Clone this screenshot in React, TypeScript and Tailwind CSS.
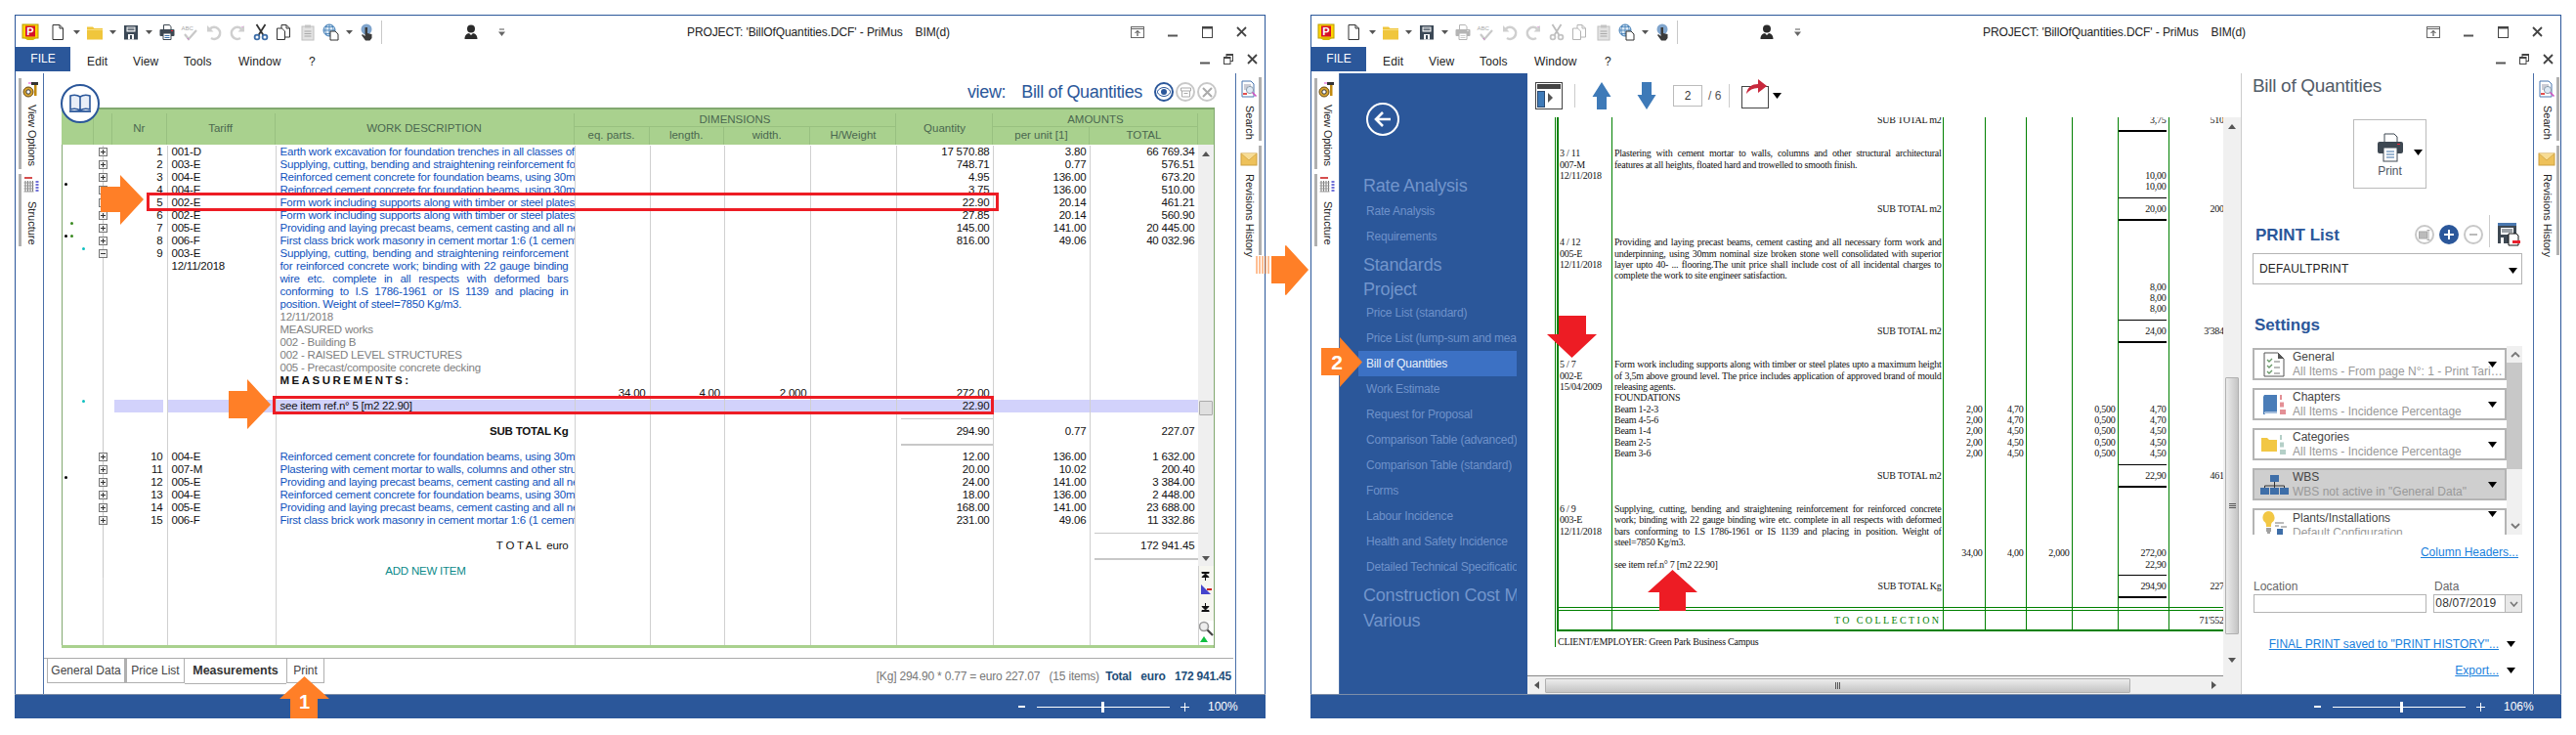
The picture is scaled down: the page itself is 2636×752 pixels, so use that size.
import React from "react";

const Dd = ({ className = "" }: { className?: string }) => (
  <svg width="7" height="5" viewBox="0 0 7 5" className={"flex-none " + className}><path d="M0 1h7L3.5 5z" fill="#555" /></svg>
);
const BlackTri = ({ className = "" }: { className?: string }) => (
  <svg width="9" height="6" viewBox="0 0 9 6" className={"flex-none " + className}><path d="M0 0h9L4.5 6z" fill="#000" /></svg>
);

const Ic = ({ children, className = "" }: { children: React.ReactNode; className?: string }) => (
  <svg width="18" height="18" viewBox="0 0 18 18" className={"flex-none " + className}>{children}</svg>
);

const PLogo = () => (
  <Ic>
    <rect x="1" y="1" width="16" height="14" fill="#ffd400" stroke="#b89b00" />
    <rect x="4" y="2.5" width="10" height="11" fill="#d5102a" />
    <path d="M3 15h12l-3 2H6z" fill="#d8b800" />
    <text x="9" y="12" textAnchor="middle" fontSize="11" fontWeight="bold" fill="#fff" fontFamily="Liberation Sans">P</text>
  </Ic>
);
const DocI = () => (
  <Ic><path d="M4 1.5h7l3.5 3.5v11.5H4z" fill="#fff" stroke="#333" /><path d="M11 1.5V5h3.5" fill="none" stroke="#333" /></Ic>
);
const FolderI = () => (
  <Ic><path d="M1 5V3.5h6L8.5 5H17v11.5H1z" fill="#f0c63c" /><path d="M1 6.5h16" stroke="#f8dd80" /></Ic>
);
const SaveI = () => (
  <Ic><path d="M2 2h14v14.5H2z" fill="#3b4856" /><path d="M4.5 3.5h9v5h-9z" fill="#fff" /><path d="M5.5 5h7M5.5 6.7h7" stroke="#3b4856" /><path d="M6 11h6v5.5H6z" fill="#fff" /><path d="M8 12h2v4H8z" fill="#3b4856" /></Ic>
);
const PrinterI = ({ off }: { off?: boolean }) => {
  const c = off ? "#b4b4b4" : "#3e4852";
  return (
    <Ic>
      <path d="M5.5 1.5h6l1.5 2v4H5.5z" fill="#fff" stroke={c} />
      <rect x="1.5" y="6" width="15" height="7" rx="1" fill={c} />
      <rect x="13" y="7" width="2" height="1" fill={off ? "#ddd" : "#e23"} />
      <path d="M5 10h8v6.5H5z" fill="#fff" stroke={c} />
      <path d="M6.5 12.5h5M6.5 14.5h5" stroke={off ? "#ccc" : "#3a6ea5"} />
    </Ic>
  );
};
const AbcI = () => (
  <Ic>
    <text x="0.5" y="7" fontSize="6" fill="#a8a8a8" fontFamily="Liberation Sans">ABC</text>
    <path d="M4 11l4 5 8-9" fill="none" stroke="#c8c8c8" strokeWidth="2.2" />
    <path d="M7 15l1 1.5" stroke="#d070c8" />
  </Ic>
);
const UndoI = ({ flip }: { flip?: boolean }) => (
  <Ic className={flip ? "-scale-x-100" : ""}>
    <path d="M5 5.5a6 6 0 1 1 1 9.5" fill="none" stroke="#cfcfcf" strokeWidth="2.6" />
    <path d="M2 2v6.5h6.5z" fill="#cfcfcf" />
    {flip && <path d="M3.5 3l1 1" stroke="#d070c8" />}
  </Ic>
);
const CutI = ({ off }: { off?: boolean }) => {
  const c = off ? "#bcbcbc" : "#333";
  const b = off ? "#c4c4c4" : "#3e6ea8";
  return (
    <Ic>
      <path d="M4.5 1l7 11M13.5 1l-7 11" stroke={c} strokeWidth="1.8" />
      <circle cx="5" cy="14" r="2.4" fill="none" stroke={b} strokeWidth="1.8" />
      <circle cx="13" cy="14" r="2.4" fill="none" stroke={b} strokeWidth="1.8" />
    </Ic>
  );
};
const CopyI = ({ off }: { off?: boolean }) => {
  const c = off ? "#b4b4b4" : "#333";
  return (
    <Ic>
      <path d="M7 1.5h5l3.5 3.5v9H7z" fill="#fff" stroke={c} />
      <path d="M2.5 5h5l3 3v8.5h-8z" fill="#fff" stroke={c} />
      <path d="M12 1.5V5h3.5" fill="none" stroke={c} />
    </Ic>
  );
};
const PasteI = () => (
  <Ic><rect x="3" y="3" width="12" height="14" fill="#e2e2e2" stroke="#c0c0c0" /><rect x="6" y="1.5" width="6" height="3" fill="#c4c4c4" /><path d="M5.5 8h7M5.5 10.5h7M5.5 13h7" stroke="#a8a8a8" /></Ic>
);
const GlobeI = () => (
  <Ic>
    <circle cx="7" cy="7" r="6" fill="#dce9f5" stroke="#3e7bb5" />
    <path d="M1 7h12M7 1v12M3 3.5h8M3 10.5h8M4.5 1.8c-2 3.5-2 7 0 10.4M9.5 1.8c2 3.5 2 7 0 10.4" stroke="#3e7bb5" fill="none" strokeWidth=".8" />
    <path d="M8 8h5l3 3v6H8z" fill="#fff" stroke="#333" />
  </Ic>
);
const TouchI = () => (
  <Ic>
    <circle cx="9" cy="6" r="5.5" fill="#7fa4cc" />
    <path d="M7.5 4h2.5v6l4.5 1v4l-2 2.5H8L4 12l1-1 2.5 2z" fill="#3a3a3a" />
  </Ic>
);
const UserI = () => (
  <Ic><circle cx="9" cy="5.5" r="4" fill="#2b2b2b" /><path d="M2.5 16c0-4 2-5.5 4.5-6l2 2 2-2c2.500.5 4.500 2 4.500 6z" fill="#2b2b2b" /></Ic>
);
const QatI = () => (
  <svg width="7" height="8" viewBox="0 0 7 8" className="flex-none"><path d="M1 1h5" stroke="#555" /><path d="M0 3.500h7L3.500 8z" fill="#666" /></svg>
);
const RestoreUp = () => (
  <svg width="14" height="12" viewBox="0 0 14 12" className="flex-none"><rect x=".5" y=".5" width="13" height="11" fill="none" stroke="#666" /><path d="M.5 2.500h13" stroke="#666" /><path d="M7 10V4.500M4.500 7L7 4.500 9.500 7" fill="none" stroke="#333" /></svg>
);
const MinI = () => (<svg width="10" height="10" viewBox="0 0 10 10" className="flex-none"><path d="M0 8.500h10" stroke="#555" strokeWidth="2" /></svg>);
const MaxI = () => (<svg width="11" height="12" viewBox="0 0 11 12" className="flex-none"><rect x=".5" y=".5" width="10" height="11" fill="none" stroke="#444" /><path d="M.5 1.500h10" stroke="#444" strokeWidth="2" /></svg>);
const CloseI = () => (<svg width="11" height="11" viewBox="0 0 11 11" className="flex-none"><path d="M1 1l9 9M10 1l-9 9" stroke="#444" strokeWidth="1.800" /></svg>);
const RestoreI = () => (<svg width="10" height="11" viewBox="0 0 10 11" className="flex-none"><rect x="3" y=".5" width="6.500" height="7" fill="none" stroke="#444" /><rect x=".5" y="3.500" width="6.500" height="7" fill="#fff" stroke="#444" /><path d="M.5 4.500h6.500M3 1.500h6.500" stroke="#444" /></svg>);

const HammerI = () => (
  <Ic>
    <circle cx="6" cy="12" r="5" fill="#d7a430" stroke="#6a4a10" />
    <circle cx="6" cy="12" r="2.200" fill="#fff" stroke="#333" />
    <path d="M9 2h7v3H9z" fill="#333" />
    <path d="M12 5h2.500v11H12z" fill="#c28a10" />
    <path d="M6 2.500h3v1H6z" fill="#e040d0" />
  </Ic>
);
const StructI = () => (
  <Ic>
    <path d="M2 2h8" stroke="#c22" strokeWidth="1.600" />
    <path d="M3 5v11M5.500 5v11M8 5v11M10.500 5v11" stroke="#777" />
    <path d="M1.500 7h10M1.500 10h10M1.500 13h10M1.500 16h10" stroke="#999" />
    <path d="M13.500 6h3M13.500 9h3M13.500 12h3M13.500 15h3" stroke="#44c" strokeWidth="1.600" />
  </Ic>
);
const SearchDocI = () => (
  <Ic>
    <path d="M2 1h9l3 3v13H2z" fill="#fff" stroke="#4a76b0" />
    <path d="M4 5h7M4 7h4M4 9h3" stroke="#99a" />
    <circle cx="10" cy="10" r="3.600" fill="#dfeaf5" stroke="#8a9aaa" />
    <path d="M12.500 12.500l4 4" stroke="#d050c0" strokeWidth="1.600" />
    <path d="M3 14h4" stroke="#d22" strokeWidth="1.600" />
  </Ic>
);
const EnvelopeI = () => (
  <Ic><rect x="1" y="3" width="16" height="12" fill="#eec15a" stroke="#cda040" /><path d="M1 3l8 7 8-7" fill="#f7dc95" stroke="#d8ae50" /></Ic>
);

const RotLabel = ({ children, className }: { children: React.ReactNode; className: string }) => (
  <div className={"[writing-mode:vertical-rl] text-[11px] leading-none text-[#222] whitespace-nowrap " + className}>{children}</div>
);

const LeftRail = () => (
  <div className="w-[29px] flex-none border-r border-[#4a6fa8] flex flex-col pt-[5px] pl-[3px]">
    <div className="h-[93px] flex">
      <div className="w-[3px] h-full bg-[#b0b0b0]" />
      <div className="flex flex-col items-center w-[18px] ml-px pt-[2px]">
        <HammerI />
        <RotLabel className="mt-[7px] tracking-[-0.15px]">View Options</RotLabel>
      </div>
    </div>
    <div className="h-[74px] flex mt-[5px]">
      <div className="w-[3px] h-full bg-[#b0b0b0]" />
      <div className="flex flex-col items-center w-[18px] ml-px pt-[2px]">
        <StructI />
        <RotLabel className="mt-[8px]">Structure</RotLabel>
      </div>
    </div>
  </div>
);

const RightRail = () => (
  <div className="w-[30px] flex-none border-l border-[#4a6fa8] flex flex-col items-end pt-[4px] pr-[3px]">
    <div className="h-[65px] flex">
      <div className="flex flex-col items-center w-[20px] pt-[3px]">
        <SearchDocI />
        <RotLabel className="mt-[8px]">Search</RotLabel>
      </div>
      <div className="w-[3px] h-full bg-[#b0b0b0]" />
    </div>
    <div className="h-[112px] flex mt-[5px]">
      <div className="flex flex-col items-center w-[20px] pt-[5px]">
        <EnvelopeI />
        <RotLabel className="mt-[6px]">Revisions History</RotLabel>
      </div>
      <div className="w-[3px] h-full bg-[#b0b0b0]" />
    </div>
  </div>
);

const Chrome = ({ off }: { off?: boolean }) => (
  <>
    <div className="h-[32px] flex-none flex items-center pl-[6px] pt-px">
      <PLogo />
      <div className="ml-[10px]"><DocI /></div>
      <Dd className="ml-[7px]" />
      <div className="ml-[6px]"><FolderI /></div>
      <Dd className="ml-[6px]" />
      <div className="ml-[6px]"><SaveI /></div>
      <Dd className="ml-[6px]" />
      <div className="ml-[6px]"><PrinterI off={off} /></div>
      <div className="ml-[5px]"><AbcI /></div>
      <div className="ml-[7px]"><UndoI /></div>
      <div className="ml-[6px]"><UndoI flip /></div>
      <div className="ml-[6px]"><CutI off={off} /></div>
      <div className="ml-[5px]"><CopyI off={off} /></div>
      <div className="ml-[7px]"><PasteI /></div>
      <div className="ml-[6px]"><GlobeI /></div>
      <Dd className="ml-[6px]" />
      <div className="ml-[5px]"><TouchI /></div>
      <div className="ml-[6px] w-px h-[24px] bg-[#c8c8c8]" />
      <div className="ml-[82px]"><UserI /></div>
      <div className="ml-[19px]"><QatI /></div>
      <div className="ml-[186px] text-[12px] text-[#222] whitespace-pre tracking-[-0.1px]">{"PROJECT: 'BillOfQuantities.DCF' - PriMus    BIM(d)"}</div>
      <div className="ml-auto flex items-center">
        <RestoreUp />
        <div className="ml-[24px]"><MinI /></div>
        <div className="ml-[25px]"><MaxI /></div>
        <div className="ml-[24px] mr-[18px]"><CloseI /></div>
      </div>
    </div>
    <div className="h-[27px] flex-none flex items-start">
      <div className="w-[56px] h-[25px] bg-[#2b579a] text-white text-[12px] flex items-center justify-center pb-[2px]">FILE</div>
      <div className="flex items-center h-[27px] pl-[17px] pt-[2px] text-[12px] text-[#222] tracking-[0.15px]">
        <div className="w-[47px]">Edit</div>
        <div className="w-[52px]">View</div>
        <div className="w-[56px]">Tools</div>
        <div className="w-[72px]">Window</div>
        <div>?</div>
      </div>
      <div className="ml-auto h-[25px] flex items-center">
        <MinI />
        <div className="ml-[14px]"><RestoreI /></div>
        <div className="ml-[14px] mr-[7px]"><CloseI /></div>
      </div>
    </div>
  </>
);

const StatusBar = ({ pct, pos }: { pct: string; pos: "l" | "r" }) => (
  <div className="h-[25px] flex-none bg-[#2b579a] -mx-px -mb-px flex items-center justify-end text-white text-[12px] border-t border-[#7d8ea8]">
    <div className="w-[7px] h-[2px] bg-white" />
    <div className="relative ml-[12px] w-[136px] h-px bg-white">
      <div className={"absolute -top-[5px] w-[3px] h-[11px] bg-white " + (pos === "l" ? "left-[66px]" : "left-[69px]")} />
    </div>
    <div className="ml-[11px] relative w-[9px] h-[9px]">
      <div className="absolute left-0 top-[4px] w-[9px] h-px bg-white" />
      <div className="absolute left-[4px] top-0 w-px h-[9px] bg-white" />
    </div>
    <div className="ml-[19px] w-[30px] mr-[29px]">{pct}</div>
  </div>
);

/* ---------- Left window ---------- */
const COLS = "grid-cols-[42px_65.5px_111px_306px_77px_76.4px_88.6px_88px_99px_98.9px_111px]";
type R = { nr?: string; t?: string; d?: React.ReactNode; dc?: string; e?: string; l?: string; w?: string; q?: string; u?: string; tot?: string; x?: "p" | "m"; sel?: boolean; rq?: string; rt?: string };

const blue = "text-[#0f52bd]";
const gr = "text-[#808080]";
const J = "[text-align:justify] [text-align-last:justify] pr-[6px]";
const R1: R[] = [
  { nr: "1", t: "001-D", d: "Earth work excavation for foundation trenches in all classes of", dc: blue, q: "17 570.88", u: "3.80", tot: "66 769.34", x: "p" },
  { nr: "2", t: "003-E", d: "Supplying, cutting, bending and straightening reinforcement for", dc: blue, q: "748.71", u: "0.77", tot: "576.51", x: "p" },
  { nr: "3", t: "004-E", d: "Reinforced cement concrete for foundation beams, using 30mm", dc: blue, q: "4.95", u: "136.00", tot: "673.20", x: "p" },
  { nr: "4", t: "004-E", d: "Reinforced cement concrete for foundation beams, using 30mm", dc: blue, q: "3.75", u: "136.00", tot: "510.00", x: "p" },
  { nr: "5", t: "002-E", d: "Form work including supports along with timber or steel plates", dc: blue, q: "22.90", u: "20.14", tot: "461.21", x: "p" },
  { nr: "6", t: "002-E", d: "Form work including supports along with timber or steel plates", dc: blue, q: "27.85", u: "20.14", tot: "560.90", x: "p" },
  { nr: "7", t: "005-E", d: "Providing and laying precast beams, cement casting and all necessary", dc: blue, q: "145.00", u: "141.00", tot: "20 445.00", x: "p" },
  { nr: "8", t: "006-F", d: "First class brick work masonry in cement mortar 1:6 (1 cement", dc: blue, q: "816.00", u: "49.06", tot: "40 032.96", x: "p" },
  { nr: "9", t: "003-E", d: "Supplying, cutting, bending and straightening reinforcement", dc: blue + " " + J, x: "m" },
  { t: "12/11/2018", d: "for reinforced concrete work; binding with 22 gauge binding", dc: blue + " " + J },
  { d: "wire etc. complete in all respects with deformed bars", dc: blue + " " + J },
  { d: "conforming to I.S 1786-1961 or IS 1139 and placing in", dc: blue + " " + J },
  { d: "position. Weight of steel=7850 Kg/m3.", dc: blue },
  { d: "12/11/2018", dc: gr },
  { d: "MEASURED works", dc: gr },
  { d: "002 - Building B", dc: gr },
  { d: "002 - RAISED LEVEL STRUCTURES", dc: gr },
  { d: "005 - Precast/composite concrete decking", dc: gr },
  { d: "MEASUREMENTS:", dc: "font-bold tracking-[2.5px] text-[#111]" },
  { e: "34.00", l: "4.00", w: "2.000", q: "272.00" },
  { d: "see item ref.n° 5 [m2 22.90]", dc: "text-[#111]", q: "22.90", sel: true },
  { rq: "thin" },
  { d: "SUB TOTAL Kg", dc: "font-bold text-right text-[#111] pr-[6px]", q: "294.90", u: "0.77", tot: "227.07" },
  { rq: "thick" },
  { nr: "10", t: "004-E", d: "Reinforced cement concrete for foundation beams, using 30mm", dc: blue, q: "12.00", u: "136.00", tot: "1 632.00", x: "p" },
  { nr: "11", t: "007-M", d: "Plastering with cement mortar to walls, columns and other structural", dc: blue, q: "20.00", u: "10.02", tot: "200.40", x: "p" },
  { nr: "12", t: "005-E", d: "Providing and laying precast beams, cement casting and all necessary", dc: blue, q: "24.00", u: "141.00", tot: "3 384.00", x: "p" },
  { nr: "13", t: "004-E", d: "Reinforced cement concrete for foundation beams, using 30mm", dc: blue, q: "18.00", u: "136.00", tot: "2 448.00", x: "p" },
  { nr: "14", t: "005-E", d: "Providing and laying precast beams, cement casting and all necessary", dc: blue, q: "168.00", u: "141.00", tot: "23 688.00", x: "p" },
  { nr: "15", t: "006-F", d: "First class brick work masonry in cement mortar 1:6 (1 cement", dc: blue, q: "231.00", u: "49.06", tot: "11 332.86", x: "p" },
  { rt: "thin" },
  { d: "T O T A L  euro", dc: "text-right text-[#111] pr-[6px] whitespace-pre", tot: "172 941.45" },
  { rt: "thick" },
  { d: "ADD NEW ITEM", dc: "text-center text-[#0a8a8a]" },
];

const cellB = "border-r border-[#d0d0d0] min-w-0 overflow-hidden";
const Num = ({ v, sel }: { v?: string; sel?: boolean }) => (
  <div className={cellB + " text-right pr-[4px] " + (sel ? "bg-[#d2d2fb]" : "")}>{v}</div>
);
const Rule = ({ kind }: { kind?: string }) => (
  <div className={cellB + " flex items-center pl-[4px]"}>
    {kind && <div className={"w-full " + (kind === "thick" ? "h-[2px] bg-[#c8c8c8]" : "h-px bg-[#c8c8c8]")} />}
  </div>
);
const Row1 = ({ r }: { r: R }) => (
  <div className={"grid h-[13px] " + COLS}>
    <div className="border-r border-[#c8c8c8] relative">
      {r.x && (
        <div className="absolute -right-[5px] top-[2px] w-[9px] h-[9px] bg-[#eee] border border-[#777] flex items-center justify-center text-[#333]">
          <div className="w-[5px] h-px bg-[#333]" />
          {r.x === "p" && <div className="absolute w-px h-[5px] bg-[#333]" />}
        </div>
      )}
    </div>
    <div className={cellB + " text-right pr-[4px]"}>
      {r.sel ? <div className="ml-[11px] h-full bg-[#d2d2fb]" /> : r.nr}
    </div>
    <div className={cellB + " pl-[4px] whitespace-nowrap " + (r.sel ? "bg-[#d2d2fb]" : "")}>{r.t}</div>
    <div className={cellB + " pl-[4px] pr-[3px] whitespace-nowrap " + (r.sel ? "bg-[#d2d2fb] " : "") + (r.dc || "")}>{r.d}</div>
    <Num v={r.e} sel={r.sel} />
    <Num v={r.l} sel={r.sel} />
    <Num v={r.w} sel={r.sel} />
    <div className={cellB + " " + (r.sel ? "bg-[#d2d2fb]" : "")} />
    {r.rq ? <Rule kind={r.rq} /> : <Num v={r.q} sel={r.sel} />}
    <Num v={r.u} sel={r.sel} />
    {r.rt ? <Rule kind={r.rt} /> : <Num v={r.tot} sel={r.sel} />}
  </div>
);

const Dot = ({ className }: { className: string }) => (
  <div className={"absolute w-[3px] h-[3px] rounded-full " + className} />
);

const hCell = "border-r border-[#98c080] flex items-center justify-center";
const TableHeader = () => (
  <div className="flex-none h-[38px] bg-[#a9d18e] border-t-2 border-[#82a870] pt-[4px] text-[11.5px] text-[#4b6850]">
    <div className="grid h-full grid-cols-[32.5px_19.5px_55.5px_111px_306px_77px_76.4px_88.6px_88px_99px_98.9px_111px_16.5px] grid-rows-[14px_18px]">
      <div className={hCell + " row-span-2"} />
      <div className={hCell + " row-span-2"} />
      <div className={hCell + " row-span-2"}>Nr</div>
      <div className={hCell + " row-span-2"}>Tariff</div>
      <div className={hCell + " row-span-2"}>WORK DESCRIPTION</div>
      <div className={hCell + " col-span-4 border-b"}>DIMENSIONS</div>
      <div className={hCell + " row-span-2"}>Quantity</div>
      <div className={hCell + " col-span-2 border-b"}>AMOUNTS</div>
      <div className="row-span-2" />
      <div className={hCell}>eq. parts.</div>
      <div className={hCell}>length.</div>
      <div className={hCell}>width.</div>
      <div className={hCell}>H/Weight</div>
      <div className={hCell}>per unit [1]</div>
      <div className={hCell}>TOTAL</div>
    </div>
  </div>
);

const VScrollMini = () => (
  <div className="w-[16.5px] flex-none flex flex-col">
    <div className="h-[431px] bg-[#efefef] flex flex-col items-center relative">
      <svg width="8" height="5" viewBox="0 0 8 5" className="mt-[7px]"><path d="M0 5h8L4 0z" fill="#555" /></svg>
      <div className="absolute top-[262px] left-[1px] w-[14px] h-[15px] bg-[#e0e0e0] border border-[#aaa] rounded-[1px]" />
      <svg width="8" height="5" viewBox="0 0 8 5" className="absolute bottom-[5px]"><path d="M0 0h8L4 5z" fill="#555" /></svg>
    </div>
    <div className="h-[56px] bg-[#f6f6f0] flex flex-col items-center text-[#111]">
      <svg width="9" height="9" viewBox="0 0 9 9" className="mt-[6px]"><path d="M1 0h7v1.500H1zM4.500 2L1 5.500h7zM4.500 5v4" fill="#111" stroke="#111" /></svg>
      <svg width="12" height="12" viewBox="0 0 12 12" className="mt-[3px]"><path d="M1 1v10h10z" fill="#4444cc" /><path d="M7 5h5v2H7z" fill="#cc2222" /></svg>
      <svg width="9" height="9" viewBox="0 0 9 9" className="mt-[8px]"><path d="M1 7.500h7V9H1zM4.500 7L1 3.500h7zM4.500 4V0" fill="#111" stroke="#111" /></svg>
    </div>
    <div className="flex-1 flex flex-col">
      <svg width="16" height="16" viewBox="0 0 16 16"><circle cx="6" cy="6" r="4.500" fill="#eee" stroke="#999" strokeWidth="1.600" /><path d="M9.500 9.500L15 15" stroke="#444" strokeWidth="2.200" /></svg>
      <svg width="8" height="6" viewBox="0 0 8 6" className="ml-[2px]"><path d="M4 0l4 6H0z" fill="#10c040" /></svg>
    </div>
  </div>
);

const BoqTable = () => (
  <div className="flex-none h-[553px] w-[1180px] border-r border-[#82a870] flex flex-col relative">
    <TableHeader />
    <div className="flex-1 flex min-h-0 border-l border-[#82a870]">
      <div className="flex-1 min-w-0 flex flex-col text-[11.5px] leading-[13px] text-[#111] font-['Liberation_Sans',sans-serif] tracking-[-0.22px] pt-[1px] relative">
        {R1.map((r, i) => <Row1 key={i} r={r} />)}
        <div className={"grid flex-1 " + COLS}>
          {Array.from({ length: 11 }).map((_, i) => <div key={i} className="border-r border-[#d0d0d0]" />)}
        </div>
        <Dot className="left-[2px] top-[39px] bg-black" />
        <Dot className="left-[8px] top-[79px] bg-[#3a8a20]" />
        <Dot className="left-[2px] top-[92px] bg-black" />
        <Dot className="left-[8px] top-[92px] bg-[#3a8a20]" />
        <Dot className="left-[20px] top-[105px] bg-[#10c0c0]" />
        <Dot className="left-[20px] top-[261px] bg-[#10c0c0]" />
        <Dot className="left-[2px] top-[339px] bg-black" />
      </div>
      <VScrollMini />
    </div>
    <div className="h-[3px] flex-none bg-[#a9d18e]" />
    {/* book badge */}
    <div className="absolute -left-[1px] -top-[24px] w-[40px] h-[40px] rounded-full bg-white border-2 border-[#2b579a] flex items-center justify-center">
      <svg width="24" height="22" viewBox="0 0 24 22"><path d="M12 4C9 2 5 2 2 3v14c3-1 7-1 10 1 3-2 7-2 10-1V3c-3-1-7-1-10 1zM12 4v14" fill="#e8eef8" stroke="#2b579a" strokeWidth="1.600" /><path d="M1 19h22" stroke="#2b579a" strokeWidth="1.800" /></svg>
    </div>
  </div>
);

const CircIcon = ({ children, on }: { children: React.ReactNode; on?: boolean }) => (
  <div className={"w-[20px] h-[20px] rounded-full flex items-center justify-center bg-white border-2 " + (on ? "border-[#2b579a]" : "border-[#c8c8c8]")}>{children}</div>
);

const Tab = ({ children, className }: { children: React.ReactNode; className: string }) => (
  <div className={"flex items-center justify-center bg-white border border-[#b0b0b0] " + className}>{children}</div>
);

const LeftContent = () => (
  <div className="flex-1 min-w-0 flex flex-col">
    <div className="h-[35px] flex-none flex items-center justify-end pt-[3px] pr-[19px] text-[#2b579a]">
      <div className="text-[18px] tracking-[-0.35px]">view:</div>
      <div className="ml-[16px] text-[18px] tracking-[-0.35px]">Bill of Quantities</div>
      <div className="ml-[12px] flex gap-[2px]">
        <CircIcon on><svg width="14" height="10" viewBox="0 0 14 10"><path d="M0 5c3-6 11-6 14 0-3 6-11 6-14 0z" fill="#fff" stroke="#2b579a" /><circle cx="7" cy="5" r="3" fill="#2b579a" /></svg></CircIcon>
        <CircIcon><svg width="11" height="11" viewBox="0 0 11 11"><path d="M.5 1h10v3H.5zM1.500 4v6h8V4M3.500 6.500h4" fill="none" stroke="#aaa" /></svg></CircIcon>
        <CircIcon><svg width="11" height="11" viewBox="0 0 11 11"><path d="M1 1l9 9M10 1l-9 9" stroke="#aaa" strokeWidth="2" /></svg></CircIcon>
      </div>
    </div>
    <div className="pl-[18px]"><BoqTable /></div>
    <div className="mt-[10px] h-[37px] flex-none flex relative border-t border-[#aaa] mr-[2px] pl-[3px] text-[12px] text-[#444]">
      <Tab className="w-[81px] h-[25px] border-t-0 border-r-2">General Data</Tab>
      <Tab className="w-[60px] h-[25px] border-t-0">Price List</Tab>
      <div className="w-[104px] h-[26px] flex items-center justify-center font-bold bg-white border-b border-[#b0b0b0] text-[#333] text-[12.5px]">Measurements</div>
      <Tab className="w-[39px] h-[25px] border-t-0">Print</Tab>
      <div className="ml-auto mr-[2px] h-[36px] flex items-center whitespace-pre text-[12px] pb-[1px] tracking-[-0.2px]">
        <span className="text-[#777]">{"[Kg] 294.90 * 0.77 = euro 227.07   (15 items)  "}</span>
        <span className="font-bold text-[#1f4e79]">{"Total   euro   172 941.45"}</span>
      </div>
    </div>
  </div>
);

/* ---------- Right window ---------- */
const H = ({ children, className = "" }: { children: React.ReactNode; className?: string }) => (
  <div className={"h-[26px] flex items-center pl-[5px] text-[18px] text-[#7295cc] whitespace-nowrap tracking-[-0.2px] " + className}>{children}</div>
);
const It = ({ children, on }: { children: React.ReactNode; on?: boolean }) => (
  <div className={"h-[26px] flex items-center pl-[8px] text-[12px] whitespace-nowrap tracking-[-0.2px] " + (on ? "bg-[#3c71c4] text-[#e8f0fb]" : "text-[#6f92ca]")}>{children}</div>
);

const Sidebar = () => (
  <div className="w-[192px] flex-none bg-[#2b579a] pl-[19px] flex flex-col">
    <div className="h-[34px] w-[34px] mt-[30px] ml-[8px] rounded-full border-2 border-white flex items-center justify-center flex-none">
      <svg width="18" height="16" viewBox="0 0 18 16"><path d="M9 1L2 8l7 7M2 8h15" fill="none" stroke="#fff" strokeWidth="2.600" /></svg>
    </div>
    <div className="w-[162px] overflow-hidden mt-[38px]">
      <H>Rate Analysis</H>
      <It>Rate Analysis</It>
      <It>Requirements</It>
      <H className="mt-[3px]">Standards</H>
      <H className="-mt-[1px]">Project</H>
      <div className="-mt-[2px]">
        <It>Price List (standard)</It>
        <It>Price List (lump-sum and measure)</It>
        <It on>Bill of Quantities</It>
        <It>Work Estimate</It>
        <It>Request for Proposal</It>
        <It>Comparison Table (advanced)</It>
        <It>Comparison Table (standard)</It>
        <It>Forms</It>
        <It>Labour Incidence</It>
        <It>Health and Safety Incidence</It>
        <div className="tracking-[-0.3px]"><It>Detailed Technical Specifications</It></div>
      </div>
      <H className="mt-[3px]">Construction Cost Management</H>
      <H>Various</H>
    </div>
  </div>
);

const TbSep = () => <div className="w-px h-[24px] bg-[#ccc]" />;
const DocToolbar = () => (
  <div className="h-[45px] flex-none flex items-center pl-[8px]">
    <div className="w-[28px] h-[28px] border border-[#444] flex flex-col p-[1px]">
      <div className="h-[5px] bg-[#444]" />
      <div className="flex mt-[2px] flex-1">
        <div className="w-[8px] bg-[#3e7ab8] border border-[#2b4a70]" />
        <svg width="7" height="10" viewBox="0 0 7 10" className="ml-[2px] mt-[2px]"><path d="M1 0l5 5-5 5z" fill="#555" /></svg>
      </div>
    </div>
    <div className="ml-[12px]"><TbSep /></div>
    <svg width="20" height="28" viewBox="0 0 20 28" className="ml-[17px]"><path d="M10 0l9.500 15H15v13H5V15H.5z" fill="#3e7ab8" /></svg>
    <svg width="20" height="28" viewBox="0 0 20 28" className="ml-[26px]"><path d="M10 28L.5 13H5V0h10v13h4.500z" fill="#3e7ab8" /></svg>
    <div className="ml-[17px] w-[30px] h-[22px] border border-[#bbb] flex items-center justify-center text-[12px] text-[#333]">2</div>
    <div className="ml-[6px] text-[12px] text-[#555] w-[15px]">/ 6</div>
    <div className="ml-[6px]"><TbSep /></div>
    <div className="ml-[12px] relative w-[28px] h-[23px] border border-[#444] mt-[4px]">
      <svg width="24" height="18" viewBox="0 0 24 18" className="absolute left-[3px] -top-[9px]"><path d="M1 16c1-7 6-10 12-10V1l9 7-9 7v-5c-5 0-9 2-12 6z" fill="#c8283c" /></svg>
    </div>
    <BlackTri className="ml-[4px]" />
  </div>
);

type D = { a?: string; b?: string; bc?: string; c?: string; d?: string; e?: string; f?: string; g?: string; h?: string; r?: "thin" | "thick" };
const RS = "text-right whitespace-nowrap";
const Bc = "[text-align:justify] [text-align-last:justify]";
const Br = "text-right pr-[1px] whitespace-nowrap";
const sub = (b: string, g: string, h: string): D => ({ b, bc: Br, g, h });
const beam = (b: string, d: string, g: string): D => ({ b, c: "2,00", d, f: "0,500", g });
const DOC: D[] = [
  sub("SUB TOTAL m2", "3,75", "510,00"),
  { r: "thick" },
  {},
  { a: "3 / 11", b: "Plastering with cement mortar to walls, columns and other structural architectural", bc: Bc },
  { a: "007-M", b: "features at all heights, floated hard and trowelled to smooth finish." },
  { a: "12/11/2018", g: "10,00" },
  { g: "10,00" },
  { r: "thin" },
  sub("SUB TOTAL m2", "20,00", "200,40"),
  { r: "thick" },
  {},
  { a: "4 / 12", b: "Providing and laying precast beams, cement casting and all necessary form work and", bc: Bc },
  { a: "005-E", b: "underpinning, using 30mm nominal size broken stone well consolidated with superior", bc: Bc },
  { a: "12/11/2018", b: "layer upto 40- ... flooring.The unit price shall include cost of all incidental charges to", bc: Bc },
  { b: "complete the work to site engineer satisfaction." },
  { g: "8,00" },
  { g: "8,00" },
  { g: "8,00" },
  { r: "thin" },
  sub("SUB TOTAL m2", "24,00", "3'384,00"),
  { r: "thick" },
  {},
  { a: "5 / 7", b: "Form work including supports along with timber or steel plates upto a maximum height", bc: Bc },
  { a: "002-E", b: "of 3,5m above ground level. The price includes application of approved brand of mould", bc: Bc },
  { a: "15/04/2009", b: "releasing agents." },
  { b: "FOUNDATIONS" },
  beam("Beam 1-2-3", "4,70", "4,70"),
  beam("Beam 4-5-6", "4,70", "4,70"),
  beam("Beam 1-4", "4,50", "4,50"),
  beam("Beam 2-5", "4,50", "4,50"),
  beam("Beam 3-6", "4,50", "4,50"),
  { r: "thin" },
  sub("SUB TOTAL m2", "22,90", "461,21"),
  { r: "thick" },
  {},
  { a: "6 / 9", b: "Supplying, cutting, bending and straightening reinforcement for reinforced concrete", bc: Bc },
  { a: "003-E", b: "work; binding with 22 gauge binding wire etc. complete in all respects with deformed", bc: Bc },
  { a: "12/11/2018", b: "bars conforming to I.S 1786-1961 or IS 1139 and placing in position. Weight of", bc: Bc },
  { b: "steel=7850 Kg/m3." },
  { c: "34,00", d: "4,00", e: "2,000", g: "272,00" },
  { b: "see item ref.n° 7 [m2 22.90]", g: "22,90" },
  { r: "thin" },
  sub("SUB TOTAL Kg", "294,90", "227,07"),
  { r: "thick" },
];

const DCOLS = "grid-cols-[55px_338.5px_43px_42px_47px_47px_52px_70px]";
const gl = "border-r border-[#008000] min-w-0";
const DocRow = ({ r }: { r: D }) => (
  <div className={"grid h-[11.36px] leading-[11.36px] " + DCOLS}>
    <div className={gl + " pl-[1px] whitespace-nowrap"}>{r.a}</div>
    <div className={gl + " pl-[2px] pr-[1px] whitespace-nowrap " + (r.bc || "")}>{r.b}</div>
    <div className={gl + " pr-[2px] " + RS}>{r.c}</div>
    <div className={gl + " pr-[2px] " + RS}>{r.d}</div>
    <div className={gl + " pr-[2px] " + RS}>{r.e}</div>
    <div className={gl + " pr-[2px] " + RS}>{r.f}</div>
    <div className={gl + " pr-[2px] flex items-center justify-end"}>
      {r.r ? <div className={"w-full bg-black " + (r.r === "thick" ? "h-[2px]" : "h-px")} /> : r.g}
    </div>
    <div className={"pr-[2px] " + RS}>{r.h}</div>
  </div>
);

const DocPage = () => (
  <div className="flex-1 min-h-0 overflow-hidden pl-[28px] text-[10px] tracking-[-0.25px] text-[#111] font-['Liberation_Serif',serif]">
    <div className="w-[800px] -mt-[2.7px]">
      <div className="border-l border-[#008000] pl-[1px]">
        <div className="border-l-2 border-b-2 border-[#008000]">
          {DOC.map((r, i) => <DocRow key={i} r={r} />)}
          <div className={"grid h-[11.36px] " + DCOLS}>
            {Array.from({ length: 8 }).map((_, i) => (
              <div key={i} className={(i < 7 ? gl : "") + " flex items-center"}><div className="w-full h-[4px] border-y border-[#008000]" /></div>
            ))}
          </div>
          <div className={"grid h-[15.6px] leading-[11.36px] " + DCOLS}>
            <div className={gl} />
            <div className={gl + " text-right pr-[1px] text-[#008000] tracking-[2.4px] whitespace-nowrap pt-[1px]"}>TO COLLECTION</div>
            <div className={gl} /><div className={gl} /><div className={gl} /><div className={gl} /><div className={gl} />
            <div className={"pr-[2px] pt-[1px] " + RS}>71'552,00</div>
          </div>
        </div>
        <div className="mt-[5px] pl-[1px] whitespace-nowrap leading-[11.36px]">CLIENT/EMPLOYER: Green Park Business Campus</div>
      </div>
    </div>
  </div>
);

const HScroll = () => (
  <div className="h-[19px] flex-none border-t border-[#888] bg-[#f0f0f0] flex items-center">
    <svg width="5" height="8" viewBox="0 0 5 8" className="ml-[7px]"><path d="M5 0v8L0 4z" fill="#555" /></svg>
    <div className="ml-[6px] w-[599px] h-[15px] rounded-[1px] border border-[#b0b0b0] bg-gradient-to-b from-[#ececec] to-[#c4c4c4] flex items-center justify-center gap-px">
      <div className="w-px h-[7px] bg-[#555]" /><div className="w-px h-[7px] bg-[#555]" /><div className="w-px h-[7px] bg-[#555]" />
    </div>
    <svg width="5" height="8" viewBox="0 0 5 8" className="ml-auto mr-[7px]"><path d="M0 0v8l5-4z" fill="#555" /></svg>
  </div>
);

const VScroll = () => (
  <div className="w-[18px] flex-none bg-[#f0f0f0] flex flex-col items-center relative mt-[45px]">
    <svg width="8" height="5" viewBox="0 0 8 5" className="mt-[7px]"><path d="M0 5h8L4 0z" fill="#555" /></svg>
    <div className="mt-[254px] w-[14px] h-[263px] border border-[#b0b0b0] rounded-[1px] bg-gradient-to-r from-[#ececec] to-[#c4c4c4] flex flex-col items-center justify-center gap-px">
      <div className="w-[7px] h-px bg-[#555]" /><div className="w-[7px] h-px bg-[#555]" /><div className="w-[7px] h-px bg-[#555]" />
    </div>
    <svg width="8" height="5" viewBox="0 0 8 5" className="mt-[24px]"><path d="M0 0h8L4 5z" fill="#555" /></svg>
  </div>
);

const LI = ({ icon, title, sub: s, dim, clip }: { icon: React.ReactNode; title: string; sub: string; dim?: boolean; clip?: boolean }) => (
  <div className={"h-[33px] flex-none border-2 border-[#b4b4b4] flex items-center pl-[4px] pr-[8px] " + (dim ? "bg-[#cfcfcf]" : "bg-white") + (clip ? " border-b-0 h-[27px] items-start pt-[1px]" : "")}>
    <div className="w-[32px] flex-none flex justify-center">{icon}</div>
    <div className="ml-[3px] flex-1 min-w-0 leading-[15px] text-[12px] whitespace-nowrap">
      <div className="text-[#444]">{title}</div>
      <div className="text-[#999]">{s}</div>
    </div>
    <BlackTri />
  </div>
);

const TierMark = ({ c }: { c: string }) => (
  <svg width="7" height="20" viewBox="0 0 7 20" className="flex-none">
    <path d="M1 0v5M1 7.500v5M3 7.500v5M1 15v5M3 15v5M5 15v5" stroke={c} />
  </svg>
);

const SettingsIcons = {
  general: (
    <svg width="22" height="26" viewBox="0 0 22 26"><path d="M1 1h14l6 6v18H1z" fill="#fff" stroke="#555" /><path d="M15 1l6 6h-6z" fill="#555" /><path d="M4 8l2 2 3-3M4 14l2 2 3-3M4 20l2 2 3-3" fill="none" stroke="#6a9a6a" strokeWidth="1.400" /><path d="M11 10h6M11 16h6M11 22h6" stroke="#777" /></svg>
  ),
  chapters: (
    <div className="flex items-center gap-[3px]">
      <svg width="15" height="20" viewBox="0 0 15 20"><path d="M2 0h13v17H3a2 2 0 0 0 0 3H1V2z" fill="#4a7db8" /><path d="M3 18h12" stroke="#4a7db8" /></svg>
      <TierMark c="#c8202c" />
    </div>
  ),
  cat: (
    <div className="flex items-center gap-[3px]">
      <svg width="16" height="15" viewBox="0 0 16 15"><path d="M0 3V1h6l2 2h8v12H0z" fill="#f2c744" /></svg>
      <TierMark c="#6aa090" />
    </div>
  ),
  wbs: (
    <svg width="29" height="20" viewBox="0 0 29 20"><rect x="10" y="0" width="9" height="7" fill="#3e6ea8" /><path d="M14.500 7v4M4.500 13v-2h20v2M14.500 11v2" fill="none" stroke="#333" /><rect x="0" y="13" width="9" height="7" fill="#3e6ea8" /><rect x="10" y="13" width="9" height="7" fill="#3e6ea8" /><rect x="20" y="13" width="9" height="7" fill="#3e6ea8" /></svg>
  ),
  plant: (
    <svg width="26" height="26" viewBox="0 0 26 26"><path d="M7 0a6.500 6.500 0 0 1 4 11.600c-.8.800-1 2-1 4.400H5c0-2.400-.3-3.600-1-4.400A6.500 6.500 0 0 1 7 0z" fill="#f2c744" /><path d="M5 18h5M5 20h5M6 22h3" stroke="#444" /><path d="M14 12h9M14 15h4M20 16h6" stroke="#777" /><rect x="16" y="18" width="6" height="8" fill="#3e6ea8" /></svg>
  ),
};

const Panel = () => (
  <div className="w-[299px] flex-none border-l border-[#ccc] pl-[11px] pr-[11px] flex flex-col">
    <div className="h-[26px] flex-none flex items-center text-[19px] text-[#525c68] tracking-[-0.3px] whitespace-nowrap">Bill of Quantities</div>
    <div className="mt-[21px] ml-[103px] w-[75px] h-[71px] flex-none border border-[#bbb] relative flex flex-col items-center">
      <svg width="28" height="30" viewBox="0 0 28 30" className="mt-[13px]">
        <path d="M8 1h10l3 3v7H8z" fill="#fff" stroke="#3e4852" />
        <rect x="1" y="9" width="26" height="12" rx="2" fill="#3e4852" />
        <rect x="21" y="11" width="3" height="1" fill="#e23" />
        <rect x="7" y="15" width="14" height="14" fill="#fff" stroke="#3e4852" />
        <path d="M10 19h8M10 22h8M10 25h8" stroke="#3a6ea5" />
      </svg>
      <BlackTri className="absolute left-[61px] top-[30px]" />
      <div className="absolute bottom-[8px] text-[12px] text-[#4e5560]">Print</div>
    </div>
    <div className="mt-[35px] h-[25px] flex-none flex items-center relative">
      <div className="ml-[3px] text-[17px] font-bold text-[#2b579a] font-['Liberation_Sans',sans-serif] whitespace-nowrap">PRINT List</div>
      <div className="absolute left-[166px] top-[2px] flex gap-[5px]">
        <CircIcon><svg width="13" height="11" viewBox="0 0 13 11"><rect x=".5" y="2" width="8" height="7" fill="#bbb" stroke="#aaa" /><path d="M10 0v11M8.500 .5h3M8.500 10.500h3" stroke="#aaa" /></svg></CircIcon>
        <div className="w-[20px] h-[20px] rounded-full bg-[#2b579a] flex items-center justify-center"><svg width="10" height="10" viewBox="0 0 10 10"><path d="M5 0v10M0 5h10" stroke="#fff" strokeWidth="2" /></svg></div>
        <CircIcon><svg width="8" height="2" viewBox="0 0 8 2"><path d="M0 1h8" stroke="#bbb" strokeWidth="2" /></svg></CircIcon>
      </div>
      <div className="absolute left-[242px] top-[-8px] w-px h-[33px] bg-[#ccc]" />
      <svg width="25" height="24" viewBox="0 0 25 24" className="absolute left-[251px] top-0">
        <path d="M0 0h19v21H0z" fill="#3e4852" /><path d="M0 0h19v3H0z" fill="#4a78b0" />
        <path d="M3 5h13v7H3z" fill="#fff" /><path d="M4 7h11M4 9h11" stroke="#3e4852" />
        <path d="M3 15h3v6H3z" fill="#fff" />
        <path d="M11 11h8l2 2v10H11z" fill="#fff" stroke="#111" />
        <path d="M15 18h8v3h-8z" fill="#e8202c" />
      </svg>
    </div>
    <div className="mt-[6px] h-[32px] flex-none border border-[#b4b4b4] flex items-center pl-[6px] pr-[4px] text-[12px] text-[#222] tracking-[0.2px]">
      DEFAULTPRINT
      <BlackTri className="ml-auto mt-[3px]" />
    </div>
    <div className="mt-[31px] h-[22px] flex-none ml-[2px] text-[17px] font-bold text-[#2b579a] flex items-center font-['Liberation_Sans',sans-serif]">Settings</div>
    <div className="mt-[10px] h-[193px] flex-none flex overflow-hidden">
      <div className="w-[260px] flex-none flex flex-col gap-[8px] pt-[2px]">
        <LI icon={SettingsIcons.general} title="General" sub="All Items - From page N°: 1 - Print Tari…" />
        <LI icon={SettingsIcons.chapters} title="Chapters" sub="All Items - Incidence Percentage" />
        <LI icon={SettingsIcons.cat} title="Categories" sub="All Items - Incidence Percentage" />
        <LI icon={SettingsIcons.wbs} title="WBS" sub='WBS not active in "General Data"' dim />
        <LI icon={SettingsIcons.plant} title="Plants/Installations" sub="Default Configuration" clip />
      </div>
      <div className="w-[17px] flex-none bg-[#f0f0f0] flex flex-col items-center">
        <svg width="10" height="6" viewBox="0 0 10 6" className="mt-[6px]"><path d="M1 5l4-4 4 4" fill="none" stroke="#777" strokeWidth="1.800" /></svg>
        <div className="mt-[5px] w-full h-[109px] bg-[#c8c8c8]" />
        <svg width="10" height="6" viewBox="0 0 10 6" className="mt-auto mb-[6px]"><path d="M1 1l4 4 4-4" fill="none" stroke="#777" strokeWidth="1.800" /></svg>
      </div>
    </div>
    <div className="mt-[10px] h-[16px] flex-none flex justify-end pr-[4px] text-[12px] text-[#1a7fdc] underline leading-[16px]">Column Headers...</div>
    <div className="mt-[19px] h-[16px] flex-none flex text-[12px] text-[#666] leading-[16px]">
      <div className="w-[186px] pl-[1px]">Location</div>
      <div>Data</div>
    </div>
    <div className="h-[19px] flex-none flex">
      <div className="ml-[1px] w-[178px] border border-[#b4b4b4]" />
      <div className="ml-[7px] w-[91px] flex border border-[#b4b4b4] text-[12px] text-[#333] leading-[17px] tracking-[0.2px]">
        <div className="flex-1 pl-[1px]">08/07/2019</div>
        <div className="w-[17px] bg-[#e8e8e8] border-l border-[#b4b4b4] flex items-center justify-center">
          <svg width="9" height="6" viewBox="0 0 9 6"><path d="M1 1l3.500 4L8 1" fill="none" stroke="#777" strokeWidth="1.600" /></svg>
        </div>
      </div>
    </div>
    <div className="mt-[24px] h-[16px] flex-none flex items-center justify-end text-[12px] text-[#1a7fdc]">
      <span className="underline">{'FINAL PRINT saved to "PRINT HISTORY"...'}</span>
      <BlackTri className="ml-[8px] mr-[7px]" />
    </div>
    <div className="mt-[11px] h-[16px] flex-none flex items-center justify-end text-[12px] text-[#1a7fdc]">
      <span className="underline">Export...</span>
      <BlackTri className="ml-[8px] mr-[7px]" />
    </div>
  </div>
);

/* ---------- overlays ---------- */
const O = "#ff7f27";
const R_ = "#ed1c24";

const Window = ({ children, off, pct, pos }: { children: React.ReactNode; off?: boolean; pct: string; pos: "l" | "r" }) => (
  <div className="w-[1280px] h-[720px] flex-none border border-[#2b579a] flex flex-col bg-white">
    <Chrome off={off} />
    <div className="flex-1 min-h-0 flex">
      <LeftRail />
      {children}
      <RightRail />
    </div>
    <StatusBar pct={pct} pos={pos} />
  </div>
);

export default function App() {
  return (
    <div className="relative w-[2636px] h-[752px] bg-white overflow-hidden font-['Liberation_Sans',sans-serif] flex pl-[15px] pt-[15px] gap-[46px]">
      <Window pct="100%" pos="l"><LeftContent /></Window>
      <Window off pct="106%" pos="r">
        <Sidebar />
        <div className="w-[730px] flex-none flex">
          <div className="flex-1 min-w-0 flex flex-col">
            <DocToolbar />
            <DocPage />
            <HScroll />
          </div>
          <VScroll />
        </div>
        <Panel />
      </Window>

      {/* red highlight frames */}
      <div className="absolute left-[150px] top-[197px] w-[872px] h-[19px] border-[3px] border-[#ed1c24]" />
      <div className="absolute left-[279px] top-[405px] w-[738px] h-[19px] border-[3px] border-[#ed1c24]" />

      {/* orange arrows */}
      <svg className="absolute left-[103px] top-[179px]" width="45" height="52" viewBox="0 0 45 52"><path d="M0 12h20V0l24 25-24 26V38H0z" fill={O} /></svg>
      <svg className="absolute left-[234px] top-[388px]" width="45" height="52" viewBox="0 0 45 52"><path d="M0 12h19V0l24 26-24 25V40H0z" fill={O} /></svg>
      <svg className="absolute left-[285px] top-[692px]" width="53" height="43" viewBox="0 0 53 43"><path d="M26.500 0L52 23H40v20H12V23H1z" fill={O} /><text x="26.500" y="33" textAnchor="middle" fontSize="20" fontWeight="bold" fill="#fff" fontFamily="Liberation Sans">1</text></svg>
      <svg className="absolute left-[1285px] top-[251px]" width="55" height="52" viewBox="0 0 55 52">
        <path d="M1 11v18M4 11v18M7 11v18M10 11v18M13 11v18" stroke={O} strokeWidth="1" />
        <path d="M16 11h14V1q0-1 1-1l23 25L31 51q-1 0-1-1V39H16z" fill={O} />
      </svg>
      <svg className="absolute left-[1352px] top-[345px]" width="43" height="52" viewBox="0 0 43 52"><path d="M0 11h19V0l23 25.500L19 51V39H0z" fill={O} /><text x="16" y="33" textAnchor="middle" fontSize="21" fontWeight="bold" fill="#fff" fontFamily="Liberation Sans">2</text></svg>

      {/* red arrows */}
      <svg className="absolute left-[1583px] top-[323px]" width="52" height="44" viewBox="0 0 52 44"><path d="M12 0h28v19h11L25.500 43 0 19h12z" fill={R_} /></svg>
      <svg className="absolute left-[1686px] top-[583px]" width="52" height="43" viewBox="0 0 52 43"><path d="M25.500 0L51 23H39v19H12V23H0z" fill={R_} /></svg>
    </div>
  );
}
